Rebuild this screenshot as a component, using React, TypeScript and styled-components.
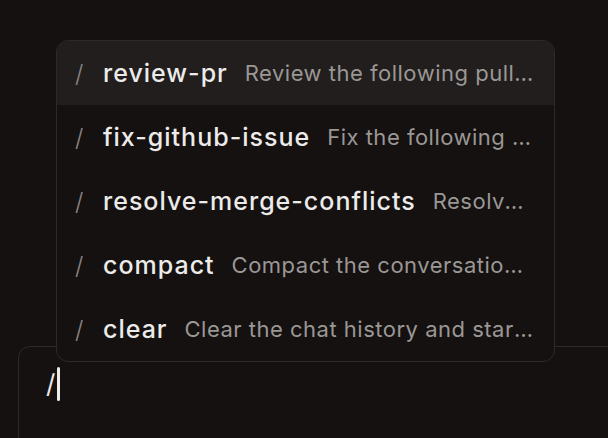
import React from "react";
import styled, { createGlobalStyle } from "styled-components";

const Global = createGlobalStyle`
  html, body { margin: 0; padding: 0; background: #141110; }
  body { font-family: Inter, "Noto Sans", sans-serif; -webkit-font-smoothing: antialiased; }
  #root { width: 608px; height: 438px; overflow: hidden; }
`;

const Page = styled.div`
  width: 608px;
  height: 438px;
  background: #141110;
  padding: 346px 0 0 18px;
  box-sizing: border-box;
  overflow: hidden;
`;

const Composer = styled.div`
  position: relative;
  width: 640px;
  height: 160px;
  box-sizing: border-box;
  border: 1px solid #2c2928;
  border-radius: 12px;
  padding: 20px 0 0 27px;
  display: flex;
  align-items: flex-start;
`;

const InputText = styled.span`
  font-size: 26px;
  line-height: 34px;
  color: #e9e7e6;
  font-weight: 400;
`;

const Caret = styled.span`
  display: inline-block;
  width: 3px;
  height: 34px;
  margin-left: 2px;
  border-radius: 2px;
  background: #eeeceb;
`;

const Menu = styled.div`
  position: absolute;
  left: 37px;
  bottom: calc(100% - 15px);
  width: 499px;
  box-sizing: border-box;
  border: 1px solid #2c2928;
  border-radius: 12px;
  background: #141110;
  overflow: hidden;
  display: flex;
  flex-direction: column;
`;

const Row = styled.div<{ $active?: boolean }>`
  height: 64px;
  display: flex;
  align-items: center;
  padding: 0 20px 0 18px;
  background: ${(p) => (p.$active ? "#211e1d" : "transparent")};
  white-space: nowrap;
  min-width: 0;
`;

const Slash = styled.span`
  font-size: 24px;
  font-weight: 300;
  color: #8a8685;
  width: 28px;
  flex: none;
`;

const Command = styled.span`
  font-size: 25px;
  font-weight: 500;
  color: #ecebea;
  letter-spacing: 1px;
  flex: none;
  margin-right: 17px;
`;

const Desc = styled.span`
  font-size: 22px;
  color: #9b9795;
  letter-spacing: 0.5px;
  overflow: hidden;
  text-overflow: ellipsis;
  min-width: 0;
  flex: 1;
`;

const items = [
  { cmd: "review-pr", desc: "Review the following pull request" },
  { cmd: "fix-github-issue", desc: "Fix the following issue" },
  { cmd: "resolve-merge-conflicts", desc: "Resolve merge conflicts" },
  { cmd: "compact", desc: "Compact the conversation history" },
  { cmd: "clear", desc: "Clear the chat history and start over" },
];

export default function App() {
  return (
    <>
      <Global />
      <Page>
        <Composer>
          <Menu>
            {items.map((it, i) => (
              <Row key={it.cmd} $active={i === 0}>
                <Slash>/</Slash>
                <Command>{it.cmd}</Command>
                <Desc>{it.desc}</Desc>
              </Row>
            ))}
          </Menu>
          <InputText>/</InputText>
          <Caret />
        </Composer>
      </Page>
    </>
  );
}
